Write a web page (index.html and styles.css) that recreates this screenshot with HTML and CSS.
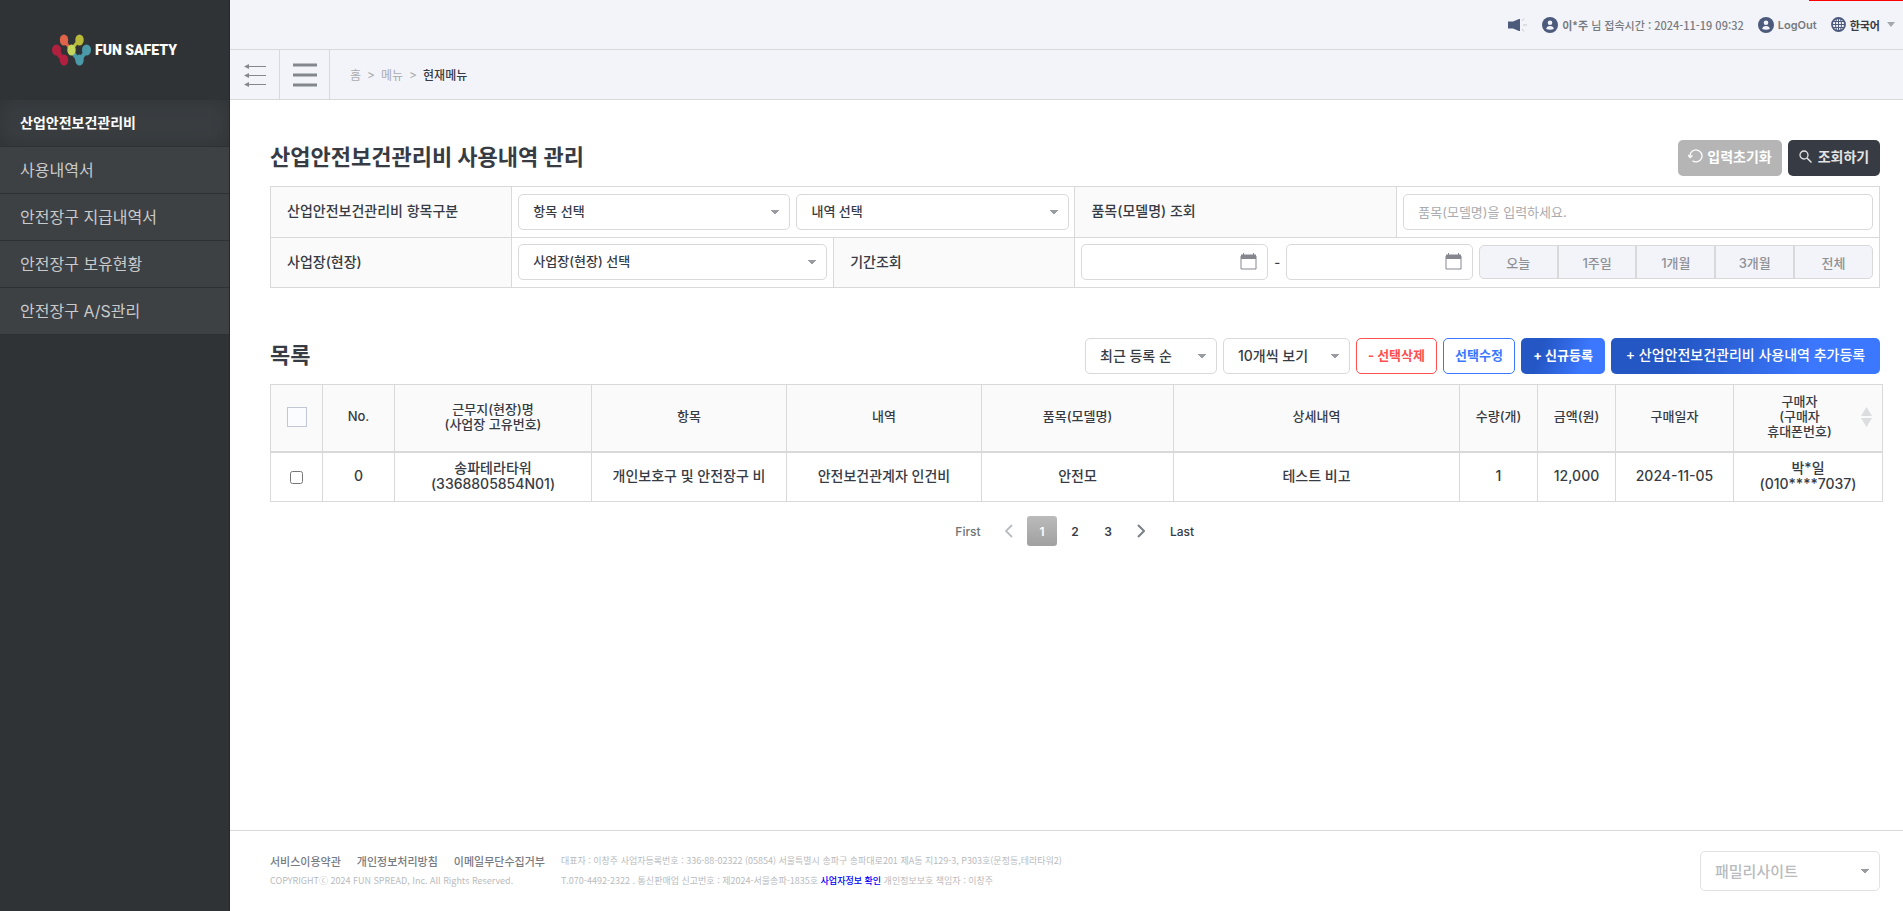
FILE: index.html
```html
<!DOCTYPE html>
<html lang="ko">
<head>
<meta charset="utf-8">
<title>산업안전보건관리비 사용내역 관리</title>
<link rel="stylesheet" href="styles.css">
</head>
<body>
<div class="app">
  <aside class="sidebar">
    <a class="logo" href="#">
      <svg width="39" height="32" viewBox="0 0 39 32" aria-hidden="true">
        <path d="M4 16L12 27" stroke="#b2203f" stroke-width="5"/>
        <path d="M12 6L19 16" stroke="#e0644a" stroke-width="3"/>
        <path d="M19 16L27 6" stroke="#b9b93a" stroke-width="3"/>
        <path d="M19 16L27 27L35 16" stroke="#4a9aa8" stroke-width="4" fill="none"/>
        <ellipse cx="4.500" cy="16" rx="4.500" ry="5.500" fill="#b2203f"/>
        <ellipse cx="12" cy="26" rx="4.200" ry="5.500" fill="#b2203f"/>
        <ellipse cx="12" cy="6" rx="4.200" ry="5.500" fill="#e0644a"/>
        <ellipse cx="27.500" cy="6" rx="4.200" ry="5.500" fill="#b9b93a"/>
        <ellipse cx="27.500" cy="26" rx="4.200" ry="5.500" fill="#4a9aa8"/>
        <ellipse cx="34.500" cy="16" rx="4.500" ry="5.500" fill="#4a9aa8"/>
        <ellipse cx="19.500" cy="16" rx="4.200" ry="5.500" fill="#c5d65c"/>
      </svg>
      <span>FUN SAFETY</span>
    </a>
    <nav class="side-menu">
      <a class="active" href="#">산업안전보건관리비</a>
      <a href="#">사용내역서</a>
      <a href="#">안전장구 지급내역서</a>
      <a href="#">안전장구 보유현황</a>
      <a href="#">안전장구 A/S관리</a>
    </nav>
  </aside>

  <div class="page">
    <div class="alert-line"></div>
    <header class="topbar">
      <button class="icon-button" aria-label="알림">
        <svg width="20" height="16" viewBox="0 0 20 16"><path d="M0 4.500H5L11 2H12V14H11L5 11.500H0Z" fill="#4c5a7c"/><path d="M14 4L16 1.500M15 8H19M14 12L16 14.500" stroke="#c3c7d0" fill="none"/></svg>
      </button>
      <span class="session">
        <svg width="16" height="16" viewBox="0 0 16 16"><circle cx="8" cy="8" r="8" fill="#4c5a7c"/><circle cx="8" cy="5.800" r="2.300" fill="#f3f4f9"/><path d="M4.200 12Q4.500 9 8 9T11.800 12Q8 13.500 4.200 12Z" fill="#f3f4f9"/></svg>
        <span><b>이*주</b> 님 접속시간 : 2024-11-19 09:32</span>
      </span>
      <a class="logout" href="#">
        <svg width="16" height="16" viewBox="0 0 16 16"><circle cx="8" cy="8" r="8" fill="#4c5a7c"/><circle cx="8" cy="5.800" r="2.300" fill="#f3f4f9"/><path d="M4.200 12Q4.500 9 8 9T11.800 12Q8 13.500 4.200 12Z" fill="#f3f4f9"/></svg>
        <span>LogOut</span>
      </a>
      <button class="language">
        <svg width="15" height="15" viewBox="0 0 15 15"><circle cx="7.500" cy="7.500" r="6.500" fill="none" stroke="#4c5a7c" stroke-width="1.800"/><ellipse cx="7.500" cy="7.500" rx="3" ry="6.500" fill="none" stroke="#4c5a7c"/><path d="M7.500 1V14M1 7.500H14M2 4.500H13M2 10.500H13" stroke="#4c5a7c"/></svg>
        <span>한국어</span>
        <svg class="caret" width="8" height="5" viewBox="0 0 8 5"><path d="M0 0H8L4 5Z" fill="#a5a8ad"/></svg>
      </button>
    </header>
    <div class="subbar">
      <button class="bar-button" aria-label="메뉴 접기">
        <svg width="22" height="24" viewBox="0 0 22 24"><path d="M3 3.500H22M3 12.500H22M3 21.500H22" stroke="#84888e"/><path d="M0 3.500L5 1V6ZM0 12.500L5 10V15ZM0 21.500L5 19V24Z" fill="#84888e"/></svg>
      </button>
      <button class="bar-button" aria-label="전체 메뉴">
        <svg width="24" height="24" viewBox="0 0 24 24"><path d="M0 2H24M0 12H24M0 22H24" stroke="#84888e" stroke-width="3"/></svg>
      </button>
      <nav class="crumbs"><a href="#">홈</a><span>&gt;</span><a href="#">메뉴</a><span>&gt;</span><strong>현재메뉴</strong></nav>
    </div>

    <main class="content">
      <div class="heading">
        <h1>산업안전보건관리비 사용내역 관리</h1>
        <div class="actions">
          <button class="btn btn-reset">
            <svg width="15" height="14" viewBox="0 0 15 14"><path d="M2 7A6 6 0 1 1 4.500 11.800M0 6L2 8.500L4.500 6.500" fill="none" stroke="#fff" stroke-width="1.300"/></svg>
            입력초기화
          </button>
          <button class="btn btn-search">
            <svg width="13" height="13" viewBox="0 0 13 13"><circle cx="5" cy="5" r="4" fill="none" stroke="#e4e4e4" stroke-width="1.300"/><path d="M8 8L12.500 12.500" stroke="#e4e4e4" stroke-width="1.500"/></svg>
            조회하기
          </button>
        </div>
      </div>

      <table class="filter">
        <colgroup><col class="f15"><col class="f20"><col class="f15"><col class="f20"><col class="f30"></colgroup>
        <tr>
          <th><label for="item">산업안전보건관리비 항목구분</label></th>
          <td colspan="2"><div class="fields">
            <select id="item"><option>항목 선택</option></select>
            <select aria-label="내역"><option>내역 선택</option></select>
          </div></td>
          <th><label for="model">품목(모델명) 조회</label></th>
          <td><div class="fields"><input id="model" type="text" placeholder="품목(모델명)을 입력하세요."></div></td>
        </tr>
        <tr>
          <th><label for="site">사업장(현장)</label></th>
          <td><div class="fields"><select id="site"><option>사업장(현장) 선택</option></select></div></td>
          <th><label for="from">기간조회</label></th>
          <td colspan="2"><div class="fields">
            <span class="date"><input id="from" type="text">
              <svg width="17" height="17" viewBox="0 0 17 17"><path d="M1 3H16V16H1Z" fill="#fff" stroke="#84888e"/><path d="M1 1.500H16V6H1Z" fill="#84888e"/><path d="M3.500 0V2M13.500 0V2" stroke="#84888e"/></svg></span>
            <span class="dash">-</span>
            <span class="date"><input type="text" aria-label="종료일">
              <svg width="17" height="17" viewBox="0 0 17 17"><path d="M1 3H16V16H1Z" fill="#fff" stroke="#84888e"/><path d="M1 1.500H16V6H1Z" fill="#84888e"/><path d="M3.500 0V2M13.500 0V2" stroke="#84888e"/></svg></span>
            <span class="periods"><button>오늘</button><button>1주일</button><button>1개월</button><button>3개월</button><button>전체</button></span>
          </div></td>
        </tr>
      </table>

      <div class="heading list-heading">
        <h2>목록</h2>
        <div class="actions">
          <select class="sort" aria-label="정렬"><option>최근 등록 순</option></select>
          <select class="count" aria-label="표시 개수"><option>10개씩 보기</option></select>
          <button class="btn btn-delete">- 선택삭제</button>
          <button class="btn btn-edit">선택수정</button>
          <button class="btn btn-new">+ 신규등록</button>
          <button class="btn btn-add">+ 산업안전보건관리비 사용내역 추가등록</button>
        </div>
      </div>

      <table class="list">
        <colgroup><col class="c-check"><col class="c-no"><col class="c-site"><col class="c-item"><col class="c-item"><col class="c-model"><col class="c-detail"><col class="c-num"><col class="c-num"><col class="c-date"><col class="c-buyer"></colgroup>
        <thead>
          <tr>
            <th><input class="check-all" type="checkbox" aria-label="전체 선택"></th>
            <th>No.</th><th>근무지(현장)명<br>(사업장 고유번호)</th><th>항목</th><th>내역</th><th>품목(모델명)</th><th>상세내역</th><th>수량(개)</th><th>금액(원)</th><th>구매일자</th>
            <th><div class="sortable"><span>구매자<br>(구매자<br>휴대폰번호)</span>
              <svg width="11" height="20" viewBox="0 0 11 20"><path d="M5.500 0L11 9H0ZM0 11H11L5.500 20Z" fill="#dcdddf"/></svg></div></th>
          </tr>
        </thead>
        <tbody>
          <tr>
            <td><input class="check" type="checkbox" aria-label="0번 선택"></td>
            <td>0</td><td>송파테라타워<br>(3368805854N01)</td><td>개인보호구 및 안전장구 비</td><td>안전보건관계자 인건비</td><td>안전모</td><td>테스트 비고</td><td>1</td><td>12,000</td><td>2024-11-05</td><td>박*일<br>(010****7037)</td>
          </tr>
        </tbody>
      </table>

      <nav class="pager" aria-label="페이지">
        <a class="first" href="#">First</a>
        <a href="#" aria-label="이전"><svg width="8" height="14" viewBox="0 0 8 14"><path d="M7 1L1 7L7 13" fill="none" stroke="#b9bcc0" stroke-width="1.800"/></svg></a>
        <a class="current" href="#">1</a>
        <a href="#">2</a>
        <a href="#">3</a>
        <a href="#" aria-label="다음"><svg width="8" height="14" viewBox="0 0 8 14"><path d="M1 1L7 7L1 13" fill="none" stroke="#7d8187" stroke-width="2"/></svg></a>
        <a class="last" href="#">Last</a>
      </nav>
    </main>

    <footer class="footer">
      <div class="policy">
        <div class="links"><a href="#">서비스이용약관</a><a href="#">개인정보처리방침</a><a href="#">이메일무단수집거부</a></div>
        <p>COPYRIGHTⓒ 2024 FUN SPREAD, Inc. All Rights Reserved.</p>
      </div>
      <div class="company">
        <p>대표자 : 이창주 사업자등록번호 : 336-88-02322 (05854) 서울특별시 송파구 송파대로201 제A동 지129-3, P303호(문정동,테라타워2)</p>
        <p>T.070-4492-2322 . 통신판매업 신고번호 : 제2024-서울송파-1835호 <a href="#">사업자정보 확인</a> 개인정보보호 책임자 : 이창주</p>
      </div>
      <select class="family" aria-label="패밀리사이트"><option>패밀리사이트</option></select>
    </footer>
  </div>
</div>
</body>
</html>
```

FILE: styles.css
```css
* { box-sizing: border-box; }
body {
  margin: 0;
  font-family: Inter, "Noto Sans CJK KR", sans-serif;
  font-size: 13px;
  font-weight: 500;
  color: #373b44;
  background: #fff;
}
a { color: inherit; text-decoration: none; }
button, input, select { font: inherit; color: inherit; margin: 0; }
button { padding: 0; border: 0; background: none; cursor: pointer; }
h1, h2, p { margin: 0; }
svg { display: block; flex: none; }

.app { display: flex; min-height: 100vh; }

/* sidebar */
.sidebar { flex: none; width: 230px; background: #303336; border-right: 1px solid #26292b; }
.logo { display: flex; align-items: center; justify-content: center; gap: 4px; height: 100px; }
.logo span { font-family: Roboto, sans-serif; font-weight: 900; font-size: 14px; color: #fff; }
.side-menu a {
  display: flex;
  align-items: center;
  height: 47px;
  padding: 0 20px 2px;
  border-bottom: 1px solid #2e3133;
  background: #3d4144;
  color: #c9cacb;
  font-size: 16px;
  font-weight: 400;
}
.side-menu .active {
  background: #3a3e41;
  box-shadow: inset 0 0 20px #303336;
  color: #fff;
  font-size: 14px;
  font-weight: 700;
}

/* top area */
.page { position: relative; flex: 1; min-width: 0; display: flex; flex-direction: column; }
.alert-line { position: absolute; top: 0; right: 0; width: 94px; height: 1px; background: #f00; }
.topbar {
  display: flex;
  align-items: center;
  justify-content: flex-end;
  gap: 14px;
  height: 50px;
  padding-right: 8px;
  background: #f3f4f9;
  border-bottom: 1px solid #d9d9d9;
  color: #777b81;
  font-size: 11px;
}
.session, .logout, .language { display: flex; align-items: center; gap: 4px; }
.session { font-family: "Noto Sans CJK KR", sans-serif; }
.logout { font-weight: 600; }
.language { color: #373b44; font-weight: 700; }
.caret { margin-left: 3px; }
.subbar { display: flex; height: 50px; background: #f3f4f9; border-bottom: 1px solid #d9d9d9; }
.bar-button { display: flex; align-items: center; justify-content: center; width: 50px; border-right: 1px solid #d9d9d9; }
.crumbs { display: flex; align-items: center; gap: 6px; padding-left: 20px; font-size: 12px; font-weight: 400; color: #a9abaf; }
.crumbs strong { color: #373b44; font-weight: 500; }

/* headings and buttons */
.content { flex: 1; padding: 40px 23px 0 40px; }
.heading { display: flex; align-items: center; justify-content: space-between; height: 36px; margin-bottom: 10px; }
.list-heading { margin-top: 50px; }
h1, h2 { padding-bottom: 2px; font-size: 22px; line-height: 32px; font-weight: 700; }
.actions { display: flex; gap: 6px; }
.btn {
  display: flex;
  align-items: center;
  justify-content: center;
  height: 36px;
  padding-bottom: 4px;
  border: 1px solid transparent;
  border-radius: 5px;
  font-weight: 700;
  white-space: nowrap;
}
.btn-reset { width: 104px; gap: 4px; background: #b5b5b5; color: #fff; font-size: 14px; }
.btn-search { width: 92px; gap: 6px; background: #373b44; color: #e4e4e4; font-size: 14px; }
.btn-delete { width: 81px; border-color: #ff5050; background: #fff; color: #ff5050; }
.btn-edit { width: 72px; border-color: #3c78ff; background: #fff; color: #3c78ff; }
.btn-new, .btn-add { border: 0; background: linear-gradient(110deg, #2456c4 25%, #3c78ff 75%); color: #fff; }
.btn-new { width: 84px; }
.btn-add { width: 269px; font-size: 14px; font-weight: 500; }

/* form controls */
select, input[type="text"] {
  height: 36px;
  min-width: 0;
  padding: 0 14px;
  border: 1px solid #d9d9d9;
  border-radius: 5px;
  background-color: #fff;
}
select {
  appearance: none;
  padding-bottom: 2px;
  background-image: linear-gradient(to top right, transparent 50%, #999da2 50%), linear-gradient(to top left, transparent 50%, #999da2 50%);
  background-size: 4px 5px;
  background-repeat: no-repeat;
  background-position: right 14px center, right 10px center;
}
input::placeholder { color: #a9abaf; opacity: 1; font-weight: 400; }
.sort { width: 132px; font-size: 14px; }
.count { width: 127px; font-size: 14px; }

/* search filter */
table { border-collapse: collapse; table-layout: fixed; }
.filter { width: 100%; }
.f15 { width: 15%; }
.f20 { width: 20%; }
.f30 { width: 30%; }
.filter th, .filter td { border: 1px solid #d9d9d9; }
.filter th { padding: 0 16px 4px; background: #fafafa; text-align: left; font-size: 14px; font-weight: 500; }
.filter td { padding: 7px 6px; }
.filter tr + tr td { padding-top: 6px; }
.fields { display: flex; align-items: center; gap: 6px; }
.fields > select, .fields > input { flex: 1; }
.date { position: relative; flex: 187; }
.date input { display: block; width: 100%; }
.date svg { position: absolute; right: 11px; top: 9px; }
.periods { display: flex; flex: 393; height: 34px; border: 1px solid #d9d9d9; border-radius: 5px; background: #f3f4f9; }
.periods button { flex: 1; color: #8e9196; font-size: 13px; }
.periods button + button { border-left: 2px solid #d9d9d9; }

/* list */
.list { width: calc(100% + 3px); font-size: 14px; text-align: center; }
.list th, .list td { padding: 0 4px 2px; border: 1px solid #d9d9d9; }
.list th { height: 67px; background: #fafafa; font-size: 13px; font-weight: 500; line-height: 15px; border-bottom-width: 2px; }
.list td { height: 50px; line-height: 16px; }
.c-check { width: 52px; }
.c-no { width: 72px; }
.c-site { width: 197px; }
.c-item { width: 195px; }
.c-model { width: 192px; }
.c-num { width: 78px; }
.c-date { width: 118px; }
.c-buyer { width: 149px; }
.sortable { display: flex; align-items: center; padding-right: 6px; }
.sortable span { flex: 1; }
.check-all {
  appearance: none;
  display: block;
  width: 20px;
  height: 20px;
  margin: 0 auto;
  border: 1px solid #c3c6d4;
  background: #fbfcff;
}
.check { display: block; width: 13px; height: 13px; margin: 3px auto 0; }

/* pager */
.pager { display: flex; align-items: center; justify-content: center; gap: 3px; margin-top: 14px; font-size: 12px; }
.pager a { display: flex; align-items: center; justify-content: center; width: 30px; height: 30px; border-radius: 3px; font-weight: 600; }
.pager .first, .pager .last { width: 46px; font-weight: 500; }
.pager .first { color: #6f7378; }
.pager .current { background: linear-gradient(#bbb, #a0a0a0); color: #fff; }

/* footer */
.footer { display: flex; align-items: flex-start; height: 81px; padding: 20px 23px 0 40px; border-top: 1px solid #d9d9d9; font-family: "Noto Sans CJK KR", sans-serif; }
.policy, .company { font-size: 9px; font-weight: 400; line-height: 20px; color: #b9bbbe; white-space: nowrap; }
.links { display: flex; gap: 16px; color: #777b81; font-size: 11px; font-weight: 500; }
.company { margin-left: 16px; }
.company a { color: #00f; font-weight: 500; }
.family { width: 180px; height: 40px; margin-left: auto; color: #b9bbbe; font-size: 15px; border-color: #e2e2e2; }
```
